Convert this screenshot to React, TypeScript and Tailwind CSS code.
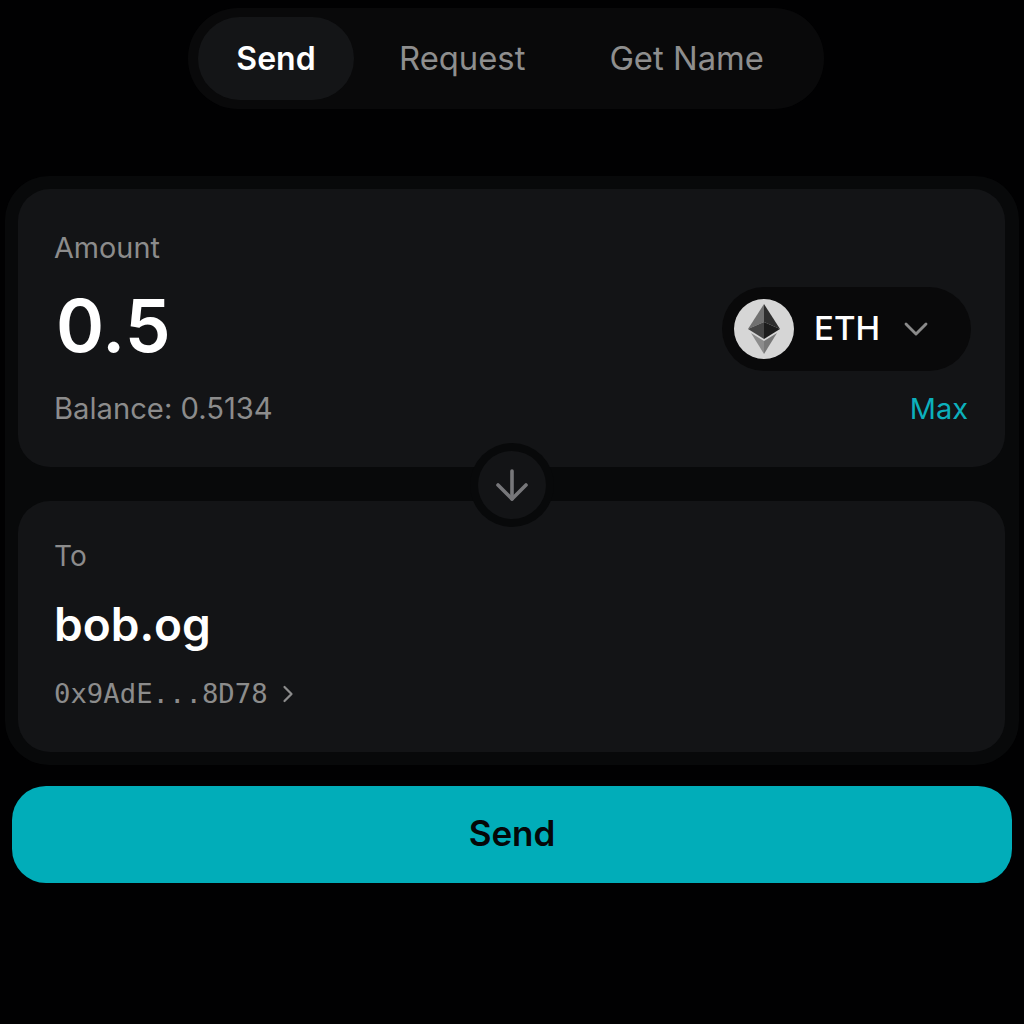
import React from "react";
import { ArrowDown, ChevronDown, ChevronRight } from "lucide-react";

function EthLogo() {
  return (
    <div className="flex h-[60px] w-[60px] items-center justify-center rounded-full bg-[#d6d6d6]">
      <svg width="32" height="50" viewBox="0 0 32 50">
        <polygon points="16,0 0,25 16,18" fill="#707070" />
        <polygon points="16,0 32,25 16,18" fill="#2e2e2e" />
        <polygon points="0,25 16,18 16,35" fill="#454545" />
        <polygon points="32,25 16,18 16,35" fill="#1c1c1c" />
        <polygon points="3,29 16,37 16,50" fill="#8c8c8c" />
        <polygon points="29,29 16,37 16,50" fill="#787878" />
      </svg>
    </div>
  );
}

export default function App() {
  return (
    <div className="flex min-h-[1024px] flex-col items-center bg-[#010102] pt-2 font-['Inter',sans-serif]">
      <div className="mr-[12px] flex h-[101px] w-[636px] items-center rounded-[50px] bg-[#09090a] pl-[10px]">
        <div className="flex h-[83px] w-[156px] items-center justify-center rounded-[42px] bg-[#141517] text-[32px] font-semibold text-white">
          Send
        </div>
        <div className="ml-[45px] text-[32.8px] text-[#8e8e8e]">Request</div>
        <div className="ml-[84px] text-[32.8px] text-[#8e8e8e]">Get Name</div>
      </div>

      <div className="relative mt-[67px] flex w-[1014px] flex-col gap-[34px] rounded-[44px] bg-[#08090a] py-[13px] pl-[13px] pr-[14px]">
        <div className="flex h-[278px] flex-col rounded-[32px] bg-[#131416] pl-[36px] pr-[34px]">
          <div className="mt-[41px] text-[28.8px] leading-[36px] text-[#8c8c8c]">Amount</div>
          <div className="mt-[21px] flex items-center justify-between">
            <div className="mb-[6px] ml-[2px] text-[73px] font-semibold leading-[78px] text-white">0.5</div>
            <div className="flex h-[84px] w-[249px] items-center rounded-[42px] bg-[#09090a] pl-3">
              <EthLogo />
              <span className="ml-5 text-[33px] font-medium text-white">ETH</span>
              <ChevronDown className="ml-[16px] text-[#8a8a8a]" size={40} strokeWidth={1.7} />
            </div>
          </div>
          <div className="mt-[20px] flex items-center justify-between pr-[3px]">
            <span className="text-[29.2px] leading-[36px] text-[#8c8c8c]">Balance: 0.5134</span>
            <span className="text-[29px] leading-[36px] text-[#0cb0bc]">Max</span>
          </div>
        </div>

        <div className="absolute left-1/2 top-[267px] flex h-[84px] w-[84px] -translate-x-1/2 items-center justify-center rounded-full bg-[#08090a]">
          <div className="flex h-[68px] w-[68px] items-center justify-center rounded-full bg-[#131416]">
            <ArrowDown className="text-[#77777a]" size={48} strokeWidth={1.8} />
          </div>
        </div>

        <div className="flex h-[251px] flex-col rounded-[32px] bg-[#131416] pl-[36px]">
          <div className="mt-[37px] text-[28px] leading-[36px] text-[#8c8c8c]">To</div>
          <div className="mt-[22px] text-[46px] font-semibold leading-[56px] text-white">bob.og</div>
          <div className="mt-[24px] flex items-center">
            <span className="font-['DejaVu_Sans_Mono',monospace] text-[27.3px] leading-[36px] text-[#8c8c8c]">0x9AdE...8D78</span>
            <ChevronRight className="ml-[6px] text-[#8c8c8c]" size={28} strokeWidth={1.9} />
          </div>
        </div>
      </div>

      <div className="mt-[21px] flex h-[97px] w-[1000px] items-center justify-center rounded-[34px] bg-[#01adb9] pb-[3px] text-[35px] font-semibold text-[#050708]">
        Send
      </div>
    </div>
  );
}
